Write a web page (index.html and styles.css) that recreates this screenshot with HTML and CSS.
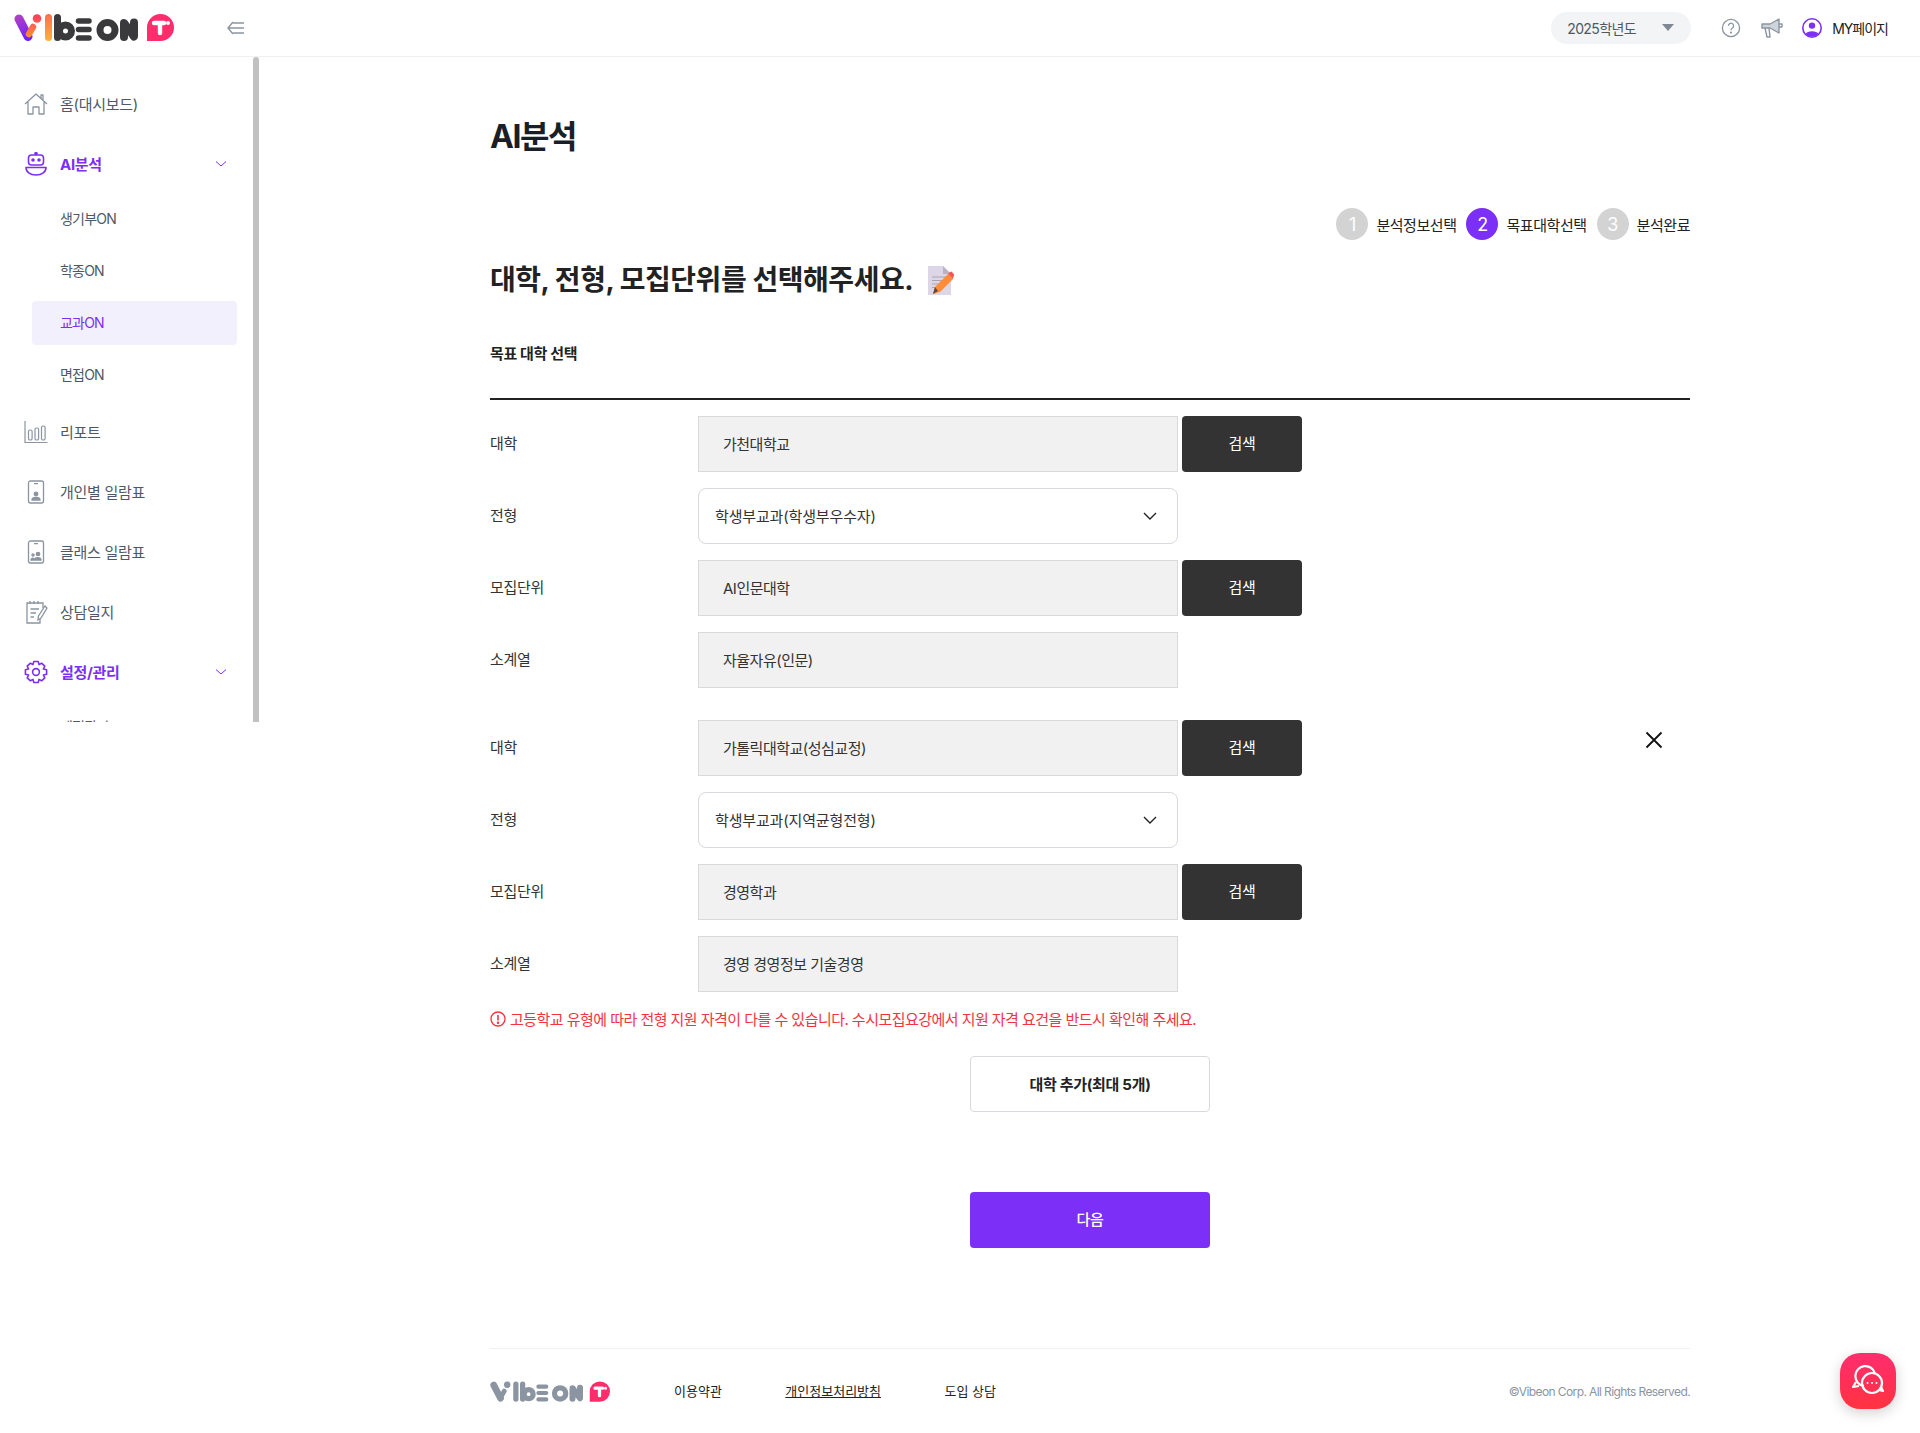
FILE: index.html
```html
<!DOCTYPE html>
<html lang="ko">
<head>
<meta charset="utf-8">
<title>AI분석</title>
<link rel="stylesheet" href="styles.css">
</head>
<body>
<svg class="defs" width="0" height="0" aria-hidden="true">
  <defs>
    <linearGradient id="gv" gradientUnits="userSpaceOnUse" x1="4" y1="2" x2="16" y2="26"><stop offset="0" stop-color="#b13fc4"/><stop offset="1" stop-color="#6a1fff"/></linearGradient>
    <linearGradient id="gi" gradientUnits="userSpaceOnUse" x1="0" y1="0" x2="0" y2="27"><stop offset="0" stop-color="#ff6f4a"/><stop offset="1" stop-color="#ffb13b"/></linearGradient>
    <linearGradient id="gr" gradientUnits="userSpaceOnUse" x1="0" y1="0" x2="0" y2="22"><stop offset="0" stop-color="#ff3a5c"/><stop offset="1" stop-color="#ff8a3c"/></linearGradient>
    <symbol id="logo" viewBox="0 0 160 27">
      <g fill="none" stroke-linecap="round" stroke-linejoin="round">
        <path d="M5 5 L14 22.500" stroke="var(--la)" stroke-width="9"/>
        <path d="M19 13 L15 20" stroke="var(--lb)" stroke-width="6.500"/>
        <path d="M34.500 3.500 V23.500" stroke="var(--lc)" stroke-width="7"/>
        <path d="M43.500 3.500 V23.500" stroke="var(--ld)" stroke-width="7"/>
        <circle cx="51.500" cy="17" r="6" stroke="var(--ld)" stroke-width="7"/>
        <path d="M64.500 7 H75 M64.500 15.500 H75 M64.500 24 H75" stroke="var(--ld)" stroke-width="5.500"/>
        <circle cx="93.500" cy="16" r="7.500" stroke="var(--ld)" stroke-width="7"/>
        <path d="M110 23 V9 L120 22.500 V8.500" stroke="var(--ld)" stroke-width="8"/>
      </g>
      <circle cx="23" cy="4.500" r="4.300" fill="var(--lb)"/>
      <path d="M133 13.500 A13.500 13.500 0 0 1 160 13.500 A13.500 13.500 0 0 1 146.500 27 H133 Z" fill="#ff2d6b"/>
      <path d="M140 9 H150 M146 9 V19" fill="none" stroke="#fff" stroke-width="4.400" stroke-linecap="round"/>
      <circle cx="154" cy="9" r="2" fill="#fff"/>
    </symbol>
  </defs>
</svg>

<header class="topbar">
  <div class="brand">
    <svg class="logo logo-color" aria-label="Vibeon T"><use href="#logo"/></svg>
    <svg class="collapse" viewBox="0 0 18 14" fill="none" stroke="#8b95a1" stroke-width="1.4"><path d="M6 1 L1 7 L6 13 M1 7 H17 M6 2 H17 M6 12 H17"/></svg>
  </div>
  <div class="top-actions">
    <div class="year"><span>2025학년도</span><i class="caret"></i></div>
    <svg class="top-icon" viewBox="0 0 20 20" fill="none" stroke="#8b95a1" stroke-width="1.3"><circle cx="10" cy="10" r="8.6"/><path d="M7.4 7.8 A2.6 2.6 0 1 1 11.4 10 C10.4 10.6 10 11 10 12.2"/><circle cx="10" cy="14.6" r=".5" fill="#8b95a1"/></svg>
    <svg class="top-icon mega" viewBox="0 0 22 22" fill="none" stroke="#8b95a1" stroke-width="1.4" stroke-linejoin="round"><path d="M1 7 H9 L18 2 V16 L9 11 H1 Z" fill="#cfd4da"/><path d="M4 11 L6 20 H9 L8 11 M18 7 H21 V10 H18"/></svg>
    <div class="my">
      <svg class="top-icon" viewBox="0 0 20 20"><circle cx="10" cy="10" r="9.2" fill="none" stroke="#7b2ff7" stroke-width="1.6"/><circle cx="10" cy="7.6" r="3.2" fill="#7b2ff7"/><path d="M3.6 16 C5 12.4 15 12.4 16.4 16 A9 9 0 0 1 3.6 16 Z" fill="#7b2ff7"/></svg>
      <span>MY페이지</span>
    </div>
  </div>
</header>

<div class="layout">
  <aside class="sidebar">
    <nav class="nav">
      <a class="item">
        <svg class="ni" viewBox="0 0 24 24" fill="none" stroke="#8b95a1" stroke-width="1.3" stroke-linejoin="round"><path d="M1 12 L12 2 L23 12 M4 10 V22 H9 V15 H15 V22 H20 V10 M17 6 V3 H19 V8"/></svg>
        <span>홈(대시보드)</span>
      </a>
      <a class="item open on">
        <svg class="ni" viewBox="0 0 24 24" fill="none" stroke="#7b2ff7" stroke-width="1.6"><circle cx="12" cy="1.6" r="1" fill="#7b2ff7"/><rect x="4.5" y="3" width="15" height="10" rx="3"/><circle cx="9" cy="8" r="1" fill="#7b2ff7"/><circle cx="15" cy="8" r="1" fill="#7b2ff7"/><path d="M2 15.5 H22 C22 20 18 23 12 23 C6 23 2 20 2 15.5 Z"/></svg>
        <span>AI분석</span>
        <svg class="chev" viewBox="0 0 12 8" fill="none" stroke="#7b2ff7" stroke-width="1"><path d="M1 1.5 L6 6 L11 1.5"/></svg>
      </a>
      <div class="sub">
        <a class="sub-item">생기부ON</a>
        <a class="sub-item">학종ON</a>
        <a class="sub-item active">교과ON</a>
        <a class="sub-item">면접ON</a>
      </div>
      <a class="item">
        <svg class="ni" viewBox="0 0 24 24" fill="none" stroke="#8b95a1" stroke-width="1.2"><path d="M1 1 V22.5 H23.5"/><rect x="4.5" y="10" width="3.6" height="10" rx="1.6"/><rect x="11" y="8" width="3.6" height="12" rx="1.6"/><rect x="17.5" y="6" width="3.6" height="14" rx="1.6"/></svg>
        <span>리포트</span>
      </a>
      <a class="item">
        <svg class="ni" viewBox="0 0 24 24" fill="none" stroke="#8b95a1" stroke-width="1.3"><rect x="4.5" y="1" width="15" height="22" rx="2"/><path d="M10 3.6 H14"/><circle cx="12" cy="14" r="1.8" fill="#8b95a1"/><path d="M8 20 C8 16.5 16 16.5 16 20 Z" fill="#8b95a1"/></svg>
        <span>개인별 일람표</span>
      </a>
      <a class="item">
        <svg class="ni" viewBox="0 0 24 24" fill="none" stroke="#8b95a1" stroke-width="1.3"><rect x="4.5" y="1" width="15" height="22" rx="2"/><path d="M10 3.6 H14"/><circle cx="14" cy="14" r="1.7" fill="#8b95a1"/><circle cx="9" cy="15" r="1.1" fill="#8b95a1"/><path d="M10.5 20 C10.5 17 17 17 17 20 Z" fill="#8b95a1"/><path d="M7 20 C7 18 9.5 18 9.5 18.5 V20 Z" fill="#8b95a1"/></svg>
        <span>클래스 일람표</span>
      </a>
      <a class="item">
        <svg class="ni" viewBox="0 0 24 24" fill="none" stroke="#8b95a1" stroke-width="1.3"><path d="M19 8 V3 H3 V23 H16 V19"/><path d="M6 1 V4 M10 1 V4 M14 1 V4 M6.5 9 H15 M6.5 13 H12 M6.5 17 H10"/><path d="M21 6 L23 8 L17 18 L14 20 L14.5 16 Z"/></svg>
        <span>상담일지</span>
      </a>
      <a class="item open on">
        <svg class="ni" viewBox="0 0 24 24" fill="none" stroke="#7b2ff7" stroke-width="1.6" stroke-linejoin="round"><circle cx="12" cy="12" r="3.4"/><path d="M9.8 1.5 H14.2 L15 4.6 L17.6 3.2 L20.8 6.2 L19.4 9 L22.6 9.8 V14.2 L19.4 15 L20.8 17.8 L17.6 20.8 L15 19.4 L14.2 22.5 H9.8 L9 19.4 L6.4 20.8 L3.2 17.8 L4.6 15 L1.4 14.2 V9.8 L4.6 9 L3.2 6.2 L6.4 3.2 L9 4.6 Z"/></svg>
        <span>설정/관리</span>
        <svg class="chev" viewBox="0 0 12 8" fill="none" stroke="#7b2ff7" stroke-width="1"><path d="M1 1.5 L6 6 L11 1.5"/></svg>
      </a>
      <div class="sub">
        <a class="sub-item">계정관리</a>
      </div>
    </nav>
    <div class="scrollbar"></div>
  </aside>

  <main class="main">
    <div class="content">
      <h1 class="title">AI분석</h1>
      <ol class="steps">
        <li class="step"><b class="dot">1</b><span>분석정보선택</span></li>
        <li class="step"><b class="dot current">2</b><span>목표대학선택</span></li>
        <li class="step"><b class="dot">3</b><span>분석완료</span></li>
      </ol>
      <h2 class="heading">
        <span>대학, 전형, 모집단위를 선택해주세요.</span>
        <svg class="memo" viewBox="0 0 26 29"><path d="M0 0 H15 L23 8 V29 H0 Z" fill="#ddd6e6"/><path d="M15 0 L23 8 H15 Z" fill="#b9b2c4"/><path d="M4 11 H19 M4 14.5 H17 M4 18 H13 M4 21.5 H10" stroke="#a9a4b2" stroke-width="1"/><path d="M5 28 L7 21 L20 8 L25 13 L12 26 Z" fill="#ff8c38"/><path d="M20 8 L22 6 Q23 5 24 6 L26 8.5 Q26.5 9.5 25.5 10.5 L25 13 Z" fill="#f4574d"/><path d="M5 28 L7 21 L10 25 Z" fill="#5b4a45"/></svg>
      </h2>
      <h3 class="section">목표 대학 선택</h3>

      <form class="form">
        <div class="group">
          <div class="row"><label class="lb">대학</label><div class="field">가천대학교</div><button type="button" class="search">검색</button></div>
          <div class="row"><label class="lb">전형</label><div class="select"><span>학생부교과(학생부우수자)</span><svg class="sel-chev" viewBox="0 0 14 8" fill="none" stroke="#222" stroke-width="1.4"><path d="M1 1 L7 7 L13 1"/></svg></div></div>
          <div class="row"><label class="lb">모집단위</label><div class="field">AI인문대학</div><button type="button" class="search">검색</button></div>
          <div class="row"><label class="lb">소계열</label><div class="field">자율자유(인문)</div></div>
        </div>
        <div class="group">
          <svg class="close" viewBox="0 0 18 18" fill="none" stroke="#111" stroke-width="1.8"><path d="M1.5 1.5 L16.5 16.5 M16.5 1.5 L1.5 16.5"/></svg>
          <div class="row"><label class="lb">대학</label><div class="field">가톨릭대학교(성심교정)</div><button type="button" class="search">검색</button></div>
          <div class="row"><label class="lb">전형</label><div class="select"><span>학생부교과(지역균형전형)</span><svg class="sel-chev" viewBox="0 0 14 8" fill="none" stroke="#222" stroke-width="1.4"><path d="M1 1 L7 7 L13 1"/></svg></div></div>
          <div class="row"><label class="lb">모집단위</label><div class="field">경영학과</div><button type="button" class="search">검색</button></div>
          <div class="row"><label class="lb">소계열</label><div class="field">경영 경영정보 기술경영</div></div>
        </div>
      </form>

      <p class="warn">
        <svg class="warn-i" viewBox="0 0 16 16" fill="none" stroke="#f5333f" stroke-width="1.3"><circle cx="8" cy="8" r="7"/><path d="M8 4 V9.4" stroke-width="1.6"/><circle cx="8" cy="11.8" r=".6" fill="#f5333f"/></svg>
        <span>고등학교 유형에 따라 전형 지원 자격이 다를 수 있습니다. 수시모집요강에서 지원 자격 요건을 반드시 확인해 주세요.</span>
      </p>

      <div class="actions">
        <button type="button" class="btn-add">대학 추가(최대 5개)</button>
        <button type="button" class="btn-next">다음</button>
      </div>

      <footer class="footer">
        <svg class="logo logo-grey" aria-label="Vibeon T"><use href="#logo"/></svg>
        <nav class="f-links">
          <a>이용약관</a>
          <a class="u">개인정보처리방침</a>
          <a>도입 상담</a>
        </nav>
        <small class="copy">©Vibeon Corp. All Rights Reserved.</small>
      </footer>
    </div>
  </main>
</div>

<button type="button" class="chat" aria-label="상담">
  <svg viewBox="0 0 34 32" fill="none" stroke="#fff" stroke-width="2.2" stroke-linejoin="round"><path d="M13 21 A10 10 0 1 1 24 8.5" /><path d="M5 17 L2 22 L8 21"/><circle cx="21" cy="18" r="10"/><path d="M28 25 L32 26 L30 22"/><circle cx="16.5" cy="18" r="1" fill="#fff" stroke="none"/><circle cx="21" cy="18" r="1" fill="#fff" stroke="none"/><circle cx="25.500" cy="18" r="1" fill="#fff" stroke="none"/></svg>
</button>
</body>
</html>
```
FILE: styles.css
```css
* { box-sizing: border-box; }
html, body { margin: 0; padding: 0; }
body {
  height: 1433px;
  overflow: hidden;
  background: #fff;
  color: #333;
  font-family: Inter, "Noto Sans CJK KR", "Noto Sans", sans-serif;
  font-size: 15px;
  letter-spacing: -0.3px;
}
.defs { position: absolute; }
h1, h2, h3, p, ol { margin: 0; padding: 0; }
button { font: inherit; letter-spacing: inherit; cursor: pointer; }

.topbar {
  height: 57px;
  border-bottom: 1px solid #eef0f2;
  display: flex;
  align-items: center;
  justify-content: space-between;
  padding: 0 32px 1px 14px;
}
.brand { display: flex; align-items: center; gap: 53px; }
.logo { display: block; }
.logo-color { width: 160px; height: 27px; --la: url(#gv); --lb: url(#gr); --lc: url(#gi); --ld: #3a3a3c; }
.logo-grey { width: 120px; height: 21px; --la: #8b95a1; --lb: #8b95a1; --lc: #8b95a1; --ld: #8b95a1; }
.collapse { width: 18px; height: 14px; }
.top-actions { display: flex; align-items: center; }
.year {
  width: 140px; height: 32px; border-radius: 16px; background: #f2f4f6;
  display: flex; align-items: center; justify-content: space-between;
  padding: 0 17px 0 16px; font-size: 14px; color: #4e5968; letter-spacing: -0.6px;
}
.caret { width: 0; height: 0; border-left: 6px solid transparent; border-right: 6px solid transparent; border-top: 7px solid #7d8894; }
.top-icon { width: 20px; height: 20px; display: block; }
.year + .top-icon { margin-left: 30px; }
.mega { width: 22px; height: 22px; margin-left: 20px; }
.my { display: flex; align-items: center; gap: 10px; margin-left: 19px; font-size: 14px; color: #222; letter-spacing: -1px; }

.layout { display: flex; align-items: flex-start; }
.sidebar { position: relative; width: 260px; height: 665px; overflow: hidden; flex: none; padding-top: 25px; }
.scrollbar { position: absolute; top: 0; left: 253px; width: 6px; height: 100%; background: #c1c1c1; border-radius: 3px 3px 0 0; }
.nav { display: flex; flex-direction: column; }
.item { height: 44px; margin-bottom: 16px; padding: 0 33px 0 24px; display: flex; align-items: center; color: #4e5968; }
.item span { margin: 0 0 2px 12px; flex: 1; }
.ni { width: 24px; height: 24px; flex: none; }
.item.on { color: #7b2ff7; font-weight: 700; }
.item.open { margin-bottom: 11px; }
.chev { width: 12px; height: 8px; flex: none; }
.sub { display: flex; flex-direction: column; gap: 8px; margin-bottom: 13px; padding-left: 32px; }
.sub-item { width: 205px; height: 44px; padding: 0 0 2px 28px; border-radius: 4px; display: flex; align-items: center; font-size: 14px; color: #4e5968; letter-spacing: -0.8px; }
.sub-item.active { background: #f3f0fd; color: #7b2ff7; }

.main { flex: 1; min-width: 0; }
.content { width: 1200px; margin: 0 auto; padding-top: 60px; position: relative; }
.title { font-size: 32px; line-height: 40px; font-weight: 700; color: #191f28; letter-spacing: -1.4px; }
.steps { list-style: none; display: flex; justify-content: flex-end; gap: 10px; margin-top: 51px; }
.step { display: flex; align-items: center; gap: 8px; font-size: 15px; color: #222; letter-spacing: -0.45px; }
.dot { width: 32px; height: 32px; border-radius: 50%; background: #d3d3d3; color: #fff; font-size: 18px; font-weight: 400; display: flex; align-items: center; justify-content: center; }
.dot.current { background: #7b2ff7; }
.heading { margin-top: 20px; display: flex; align-items: center; gap: 15px; font-size: 28px; line-height: 40px; font-weight: 700; color: #222; letter-spacing: -0.45px; }
.memo { width: 26px; height: 29px; flex: none; }
.section { margin-top: 44px; height: 56px; padding-bottom: 36px; border-bottom: 2px solid #222; font-size: 15px; line-height: 20px; font-weight: 700; color: #222; letter-spacing: -0.35px; }

.form { margin-top: 16px; display: flex; flex-direction: column; gap: 32px; }
.group { position: relative; display: flex; flex-direction: column; gap: 16px; }
.row { display: flex; align-items: center; height: 56px; }
.lb { width: 208px; flex: none; padding-bottom: 4px; }
.field, .select { width: 480px; height: 56px; flex: none; display: flex; align-items: center; color: #333; }
.field { background: #f1f1f1; border: 1px solid #d9d9d9; padding: 0 24px 2px; letter-spacing: -0.5px; }
.select { background: #fff; border: 1px solid #d6d9dd; border-radius: 8px; padding: 0 20px 0 16px; justify-content: space-between; letter-spacing: -0.15px; }
.select span { padding-bottom: 2px; }
.sel-chev { width: 14px; height: 8px; }
.search { width: 120px; height: 56px; margin-left: 4px; background: #333; color: #fff; border: 0; border-radius: 4px; padding: 0 0 4px; }
.close { position: absolute; top: 11px; right: 27px; width: 18px; height: 18px; }

.warn { margin-top: 16px; height: 22px; display: flex; align-items: center; gap: 4px; color: #f5333f; font-size: 15px; letter-spacing: -0.54px; }
.warn span { padding-bottom: 2px; }
.warn-i { width: 16px; height: 16px; flex: none; }
.actions { margin-top: 26px; display: flex; flex-direction: column; align-items: center; gap: 80px; }
.btn-add, .btn-next { width: 240px; height: 56px; border-radius: 4px; font-weight: 700; padding: 0 0 2px; }
.btn-add { background: #fff; color: #222; border: 1px solid #d6d9dd; }
.btn-next { background: #7b2ff7; color: #fff; border: 0; font-weight: 500; padding-bottom: 4px; }

.footer { margin-top: 100px; height: 85px; border-top: 1px solid #f0f1f3; display: flex; align-items: center; font-size: 13px; color: #222; letter-spacing: 0; }
.f-links { display: flex; gap: 63.5px; margin-left: 64px; padding-bottom: 2px; }
.u { text-decoration: underline; }
.copy { margin-left: auto; font-size: 12px; color: #8b95a1; letter-spacing: -0.6px; }

.chat { position: fixed; left: 1840px; top: 1353px; width: 56px; height: 56px; border: 0; border-radius: 20px; padding: 0; display: flex; align-items: center; justify-content: center; background: linear-gradient(#ff2d6f, #ff3340); box-shadow: 0 4px 14px rgba(0,0,0,.18); }
.chat svg { width: 34px; height: 32px; }
```
